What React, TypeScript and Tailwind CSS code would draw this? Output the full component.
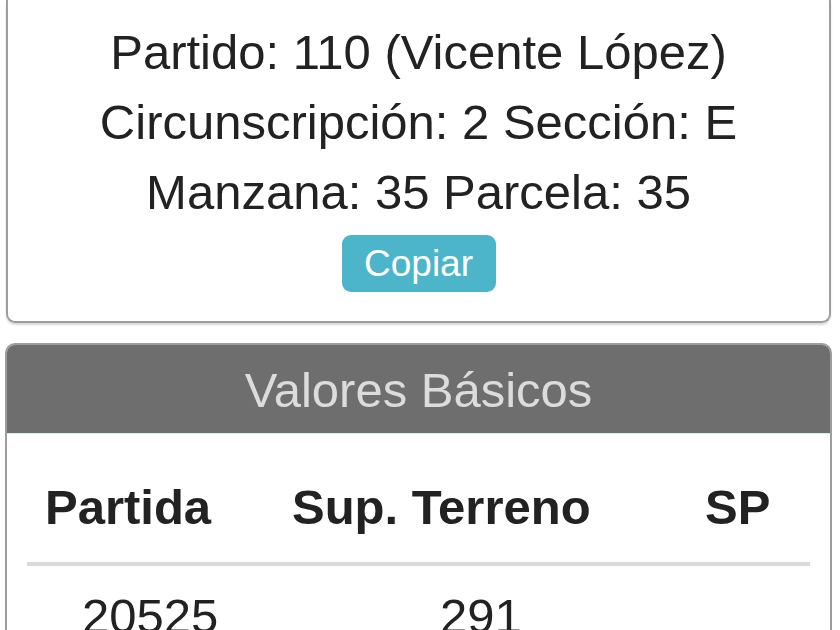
export default function App() {
  return (
    <div className="w-[840px] h-[630px] overflow-hidden bg-white font-['Liberation_Sans',Arial,sans-serif] text-[#222]">
      {/* datos catastrales */}
      <div className="ml-[6px] mr-[9px] border-2 border-t-0 border-[#9d9d9d] rounded-b-[9px] shadow-[0_2px_2px_rgba(0,0,0,0.15)] pt-[17px] pb-[29px] flex flex-col items-center">
        <p className="text-[49px] leading-[70px]">Partido: 110 (Vicente López)</p>
        <p className="text-[49px] leading-[70px]">Circunscripción: 2 Sección: E</p>
        <p className="text-[49px] leading-[70px]">Manzana: 35 Parcela: 35</p>
        <button className="mt-[8px] w-[154px] h-[57px] rounded-[9px] bg-[#4cb5c9] text-white text-[37px] leading-none flex items-center justify-center">
          Copiar
        </button>
      </div>

      {/* valores basicos */}
      <div className="ml-[5px] mr-[8px] mt-[20px] border-2 border-b-0 border-[#9d9d9d] rounded-t-[10px] overflow-hidden">
        <div className="bg-[#6e6e6e] border-b border-[#d6eef0] pt-[17px] pb-[15px] text-center text-[49px] leading-[56px] text-[#dcdcdc]">
          Valores Básicos
        </div>
        <div className="px-[20px] pt-[45px]">
          <div className="grid grid-cols-[223px_410px_1fr] text-[49px] leading-[56px] font-bold pb-[27px] border-b-[4px] border-[#dadada]">
            <div className="pl-[18px]">Partida</div>
            <div className="pl-[42px]">Sup. Terreno</div>
            <div className="pl-[45px]">SP</div>
          </div>
          <div className="grid grid-cols-[223px_410px_1fr] text-[49px] leading-[56px] pt-[22px]">
            <div className="pl-[55px]">20525</div>
            <div className="pl-[190px]">291</div>
            <div></div>
          </div>
        </div>
      </div>
    </div>
  )
}
